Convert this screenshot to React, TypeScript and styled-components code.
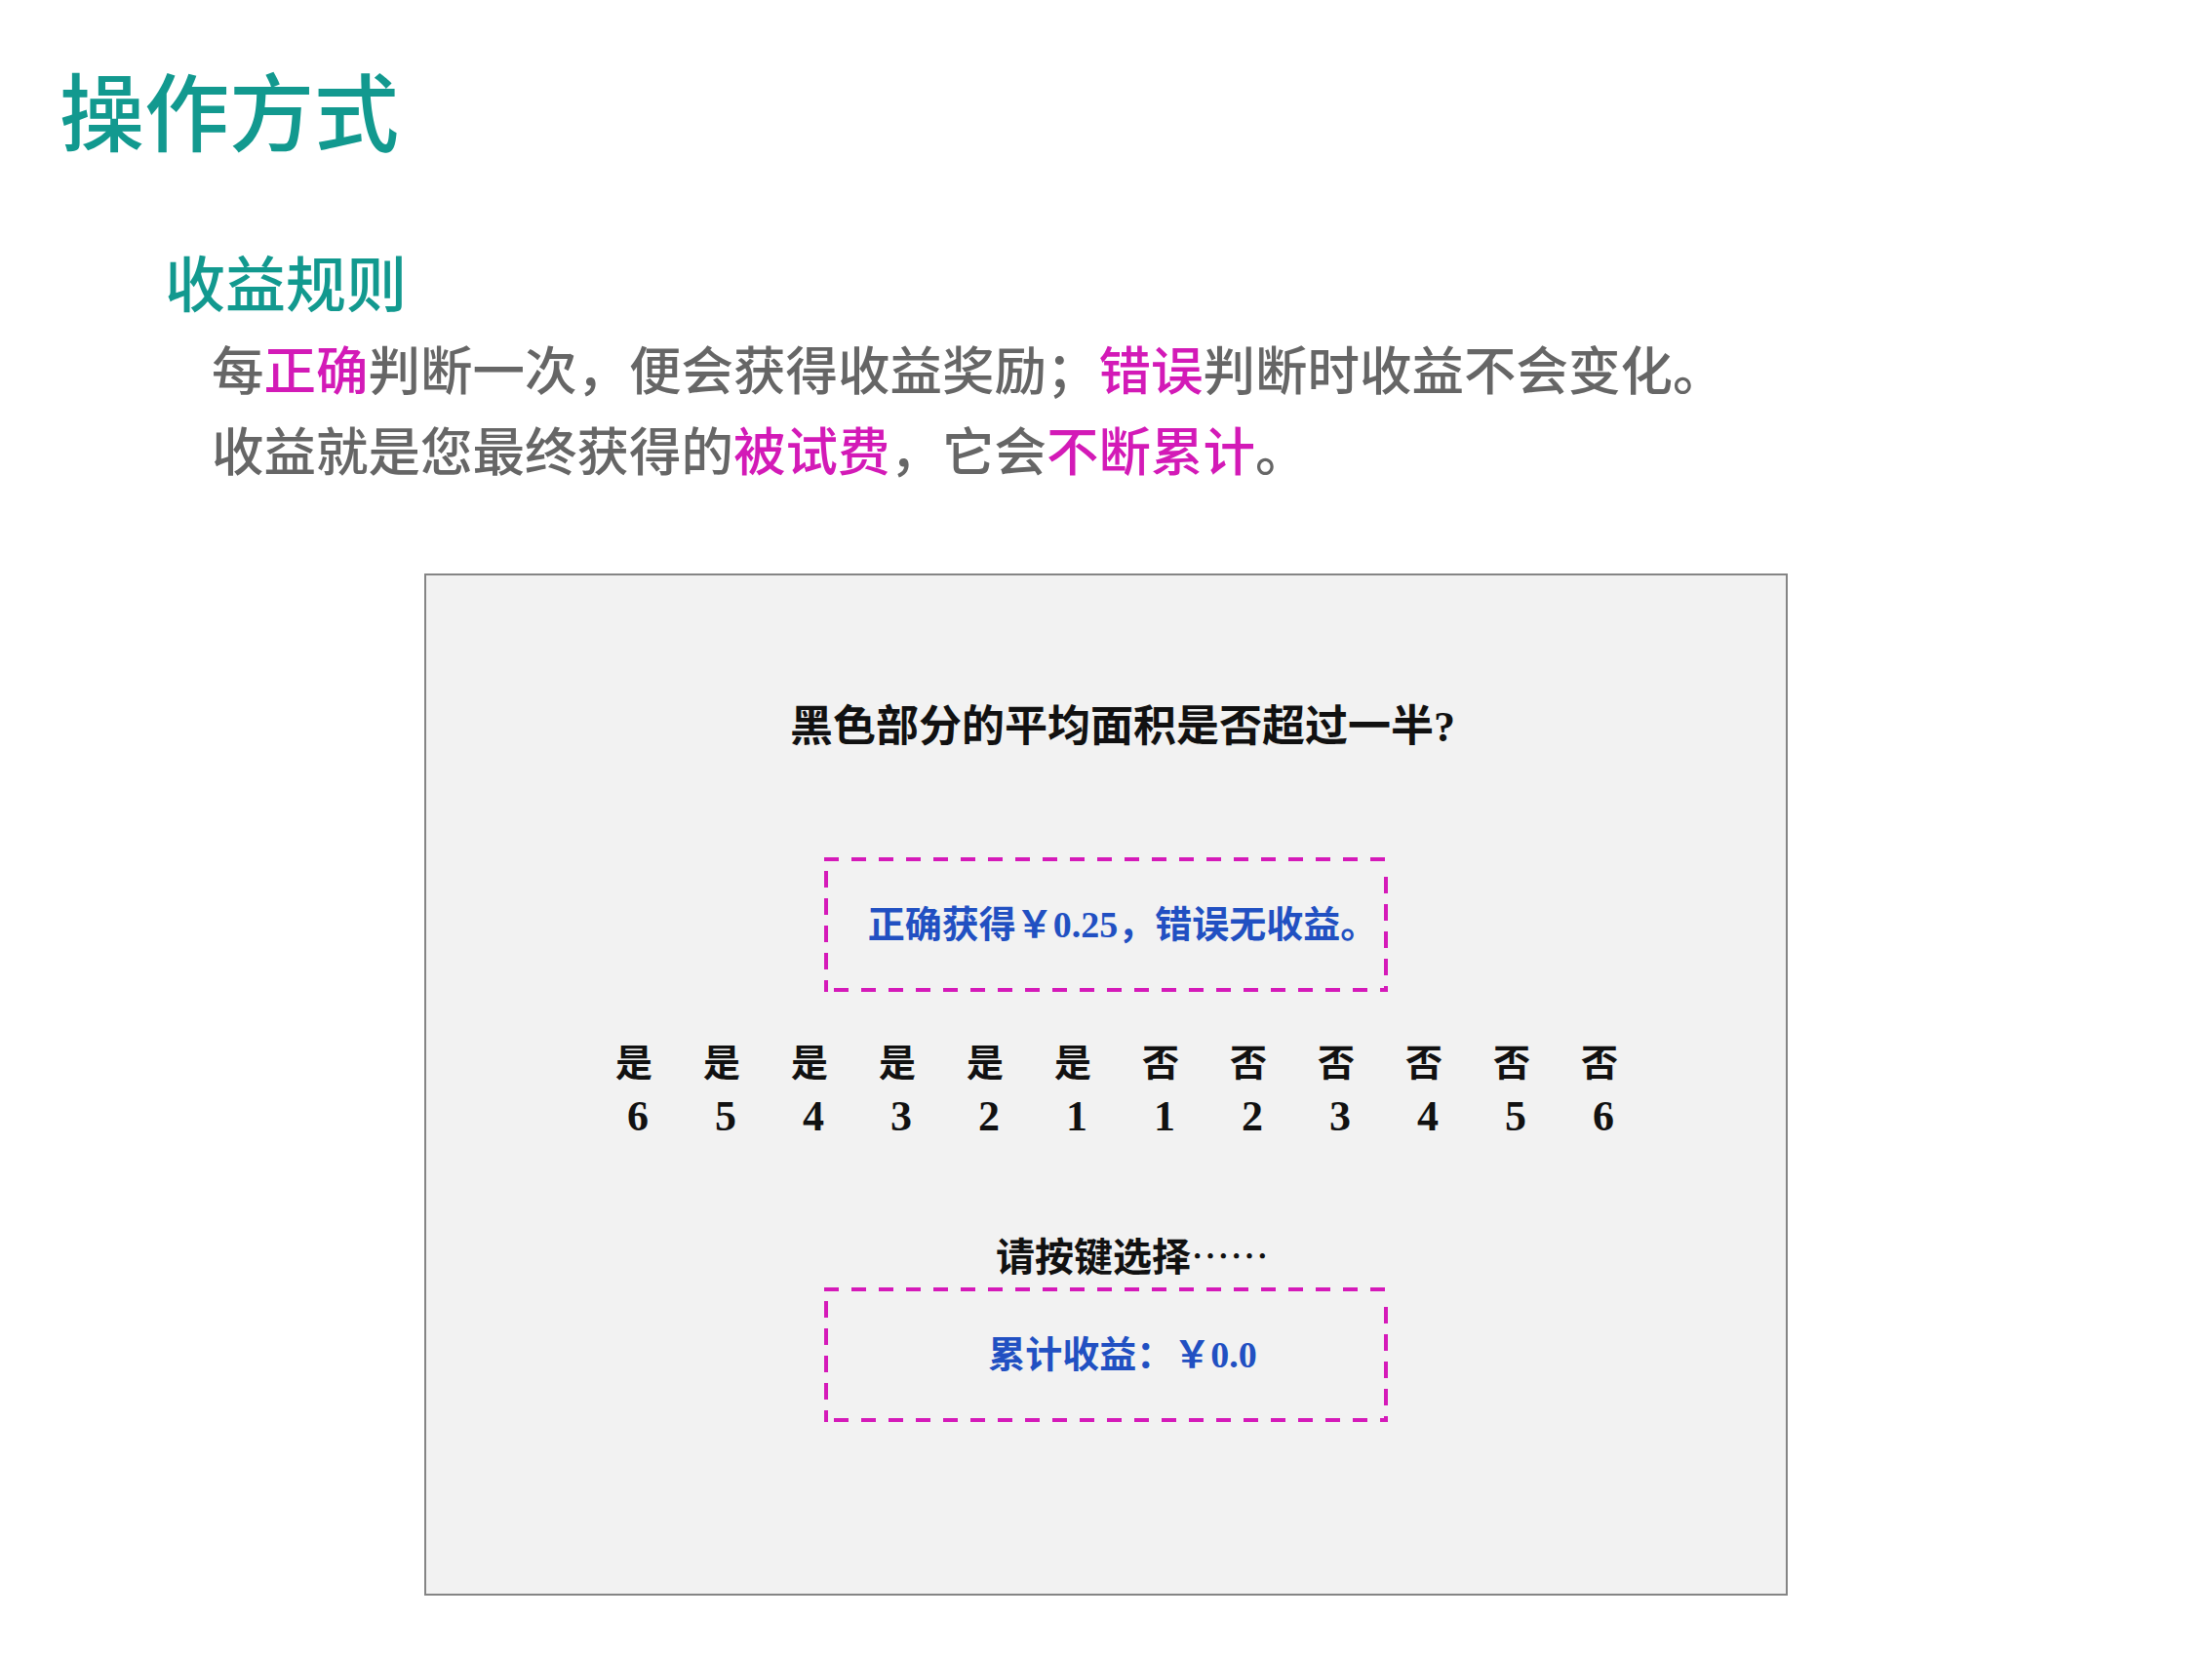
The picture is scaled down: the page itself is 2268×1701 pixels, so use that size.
import styled, { createGlobalStyle } from "styled-components";

const GlobalStyle = createGlobalStyle`
  html, body {
    margin: 0;
    padding: 0;
    background: #ffffff;
  }
  body {
    font-family: "Noto Sans CJK SC", "Noto Sans", sans-serif;
  }
`;

const Page = styled.div`
  width: 2268px;
  height: 1701px;
  box-sizing: border-box;
  padding: 68px 0 0 61px;
  display: flex;
  flex-direction: column;
  overflow: hidden;
`;

const Title = styled.h1`
  margin: 0;
  font-size: 87px;
  line-height: 1;
  font-weight: 500;
  color: #12998f;
`;

const Section = styled.section`
  margin: 102px 0 0 108px;
  display: flex;
  flex-direction: column;
`;

const SubTitle = styled.h2`
  margin: 0;
  font-size: 62px;
  line-height: 1;
  font-weight: 500;
  color: #12998f;
`;

const Rules = styled.div`
  margin: 16px 0 0 48px;
  font-size: 53.5px;
  line-height: 83px;
  font-weight: 500;
  color: #666666;
`;

const Mark = styled.span`
  color: #d31ab7;
`;

const Screen = styled.div`
  margin: 87px 0 0 374px;
  width: 1398px;
  height: 1048px;
  box-sizing: border-box;
  border: 2px solid #858585;
  background: #f2f2f2;
  display: flex;
  flex-direction: column;
  align-items: center;
  padding-top: 134px;
  font-family: "Liberation Serif", "Noto Sans CJK SC", serif;
  font-weight: 700;
  color: #111111;
`;

const Question = styled.div<{ $shift?: number }>`
  font-size: 44px;
  line-height: 1;
  margin-left: ${(p) => (p.$shift ?? 0) * 2}px;
`;

const dash = "#d51ab9";

const DashedBox = styled.div<{ $top: number }>`
  margin-top: ${(p) => p.$top}px;
  width: 578px;
  height: 138px;
  box-sizing: border-box;
  display: flex;
  align-items: center;
  justify-content: center;
  padding-left: 34px;
  background:
    repeating-linear-gradient(to right, ${dash} 0 15px, transparent 15px 28px) left top / 100% 4px no-repeat,
    repeating-linear-gradient(to right, ${dash} 0 15px, transparent 15px 28px) 10px bottom / 100% 4px no-repeat,
    repeating-linear-gradient(to bottom, ${dash} 0 17px, transparent 17px 28px) left 14px / 4px 100% no-repeat,
    repeating-linear-gradient(to bottom, ${dash} 0 17px, transparent 17px 28px) right 20px / 4px 100% no-repeat;
`;

const Reward = styled.span`
  font-size: 38px;
  line-height: 1;
  color: #2150c2;
`;

const Scale = styled.div`
  margin: 54px 0 0 22px;
  display: grid;
  grid-template-columns: repeat(12, 90px);
  row-gap: 14px;
`;

const Choice = styled.span`
  text-align: center;
  font-size: 38px;
  line-height: 1;
`;

const Level = styled.span`
  text-align: center;
  font-size: 44px;
  line-height: 1;
  padding-left: 8px;
`;

const Prompt = styled.div`
  margin: 99px 0 0 54px;
  font-family: "Noto Sans CJK SC", sans-serif;
  font-size: 40px;
  line-height: 1;
`;

const Dots = styled.span`
  font-weight: 400;
  font-feature-settings: "fwid";
`;

const options = [
  ["是", 6], ["是", 5], ["是", 4], ["是", 3], ["是", 2], ["是", 1],
  ["否", 1], ["否", 2], ["否", 3], ["否", 4], ["否", 5], ["否", 6],
] as const;

export default function App() {
  return (
    <>
      <GlobalStyle />
      <Page lang="zh-CN">
        <Title>操作方式</Title>
        <Section>
          <SubTitle>收益规则</SubTitle>
          <Rules>
            <div>
              每<Mark>正确</Mark>判断一次，便会获得收益奖励；<Mark>错误</Mark>判断时收益不会变化。
            </div>
            <div>
              收益就是您最终获得的<Mark>被试费</Mark>，它会<Mark>不断累计</Mark>。
            </div>
          </Rules>
        </Section>
        <Screen>
          <Question $shift={17}>黑色部分的平均面积是否超过一半?</Question>
          <DashedBox $top={111}>
            <Reward>正确获得￥0.25，错误无收益。</Reward>
          </DashedBox>
          <Scale>
            {options.map(([label], i) => (
              <Choice key={"c" + i}>{label}</Choice>
            ))}
            {options.map(([, n], i) => (
              <Level key={"n" + i}>{n}</Level>
            ))}
          </Scale>
          <Prompt>
            请按键选择<Dots>……</Dots>
          </Prompt>
          <DashedBox $top={14}>
            <Reward>累计收益：￥0.0</Reward>
          </DashedBox>
        </Screen>
      </Page>
    </>
  );
}
